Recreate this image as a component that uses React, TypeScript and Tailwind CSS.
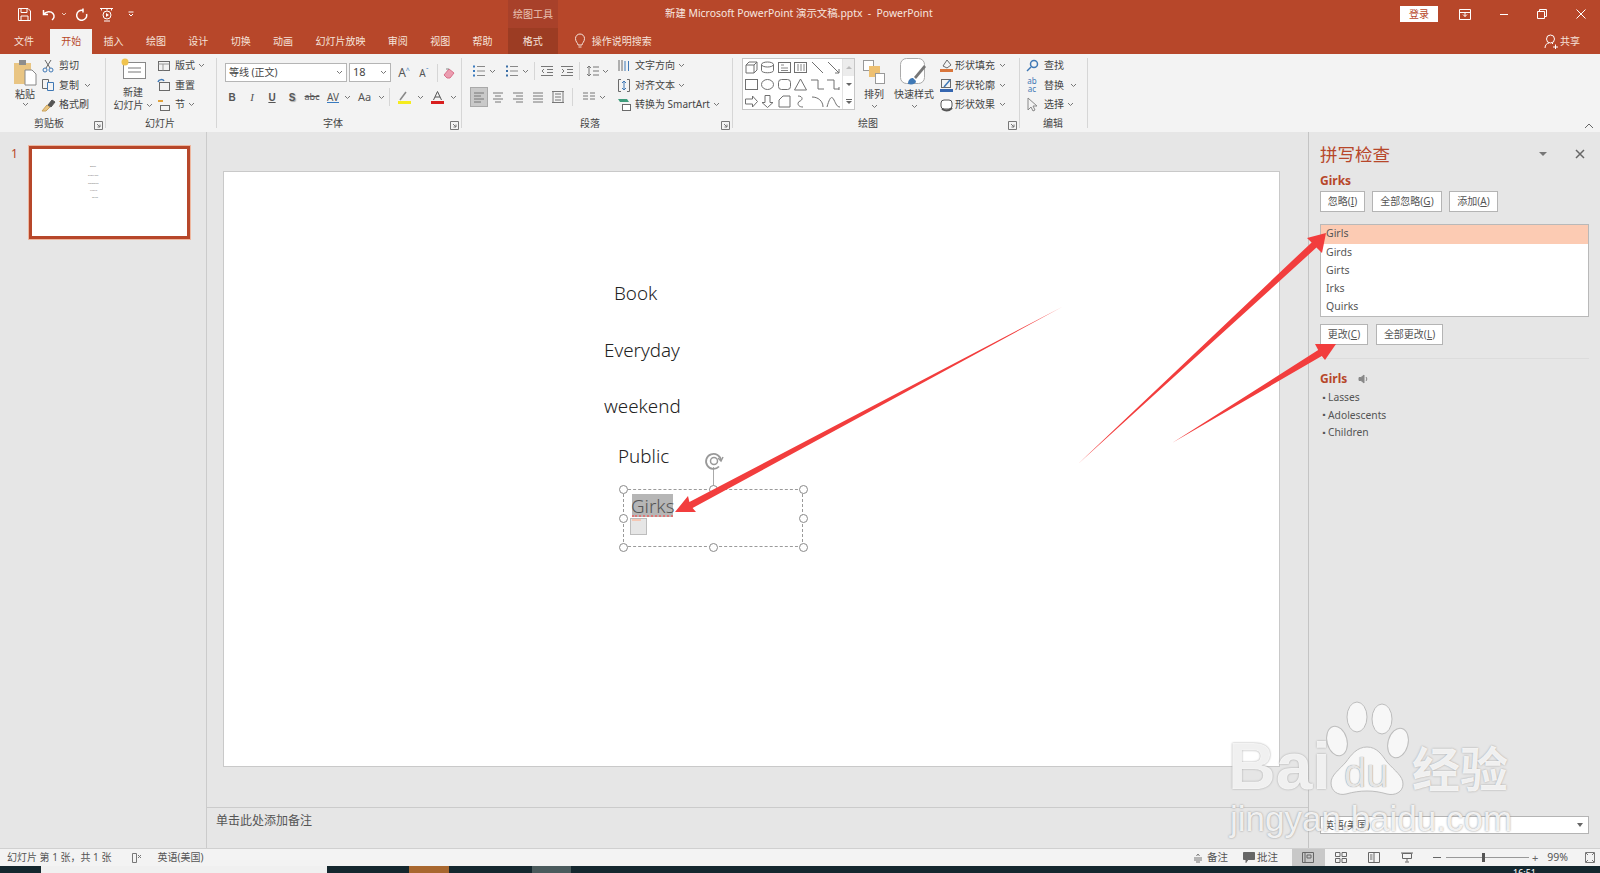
import type { ReactNode } from "react";

const TABS = ["开始", "插入", "绘图", "设计", "切换", "动画", "幻灯片放映", "审阅", "视图", "帮助"];
const SUGGESTIONS = ["Girls", "Girds", "Girts", "Irks", "Quirks"];
const SYNONYMS = ["Lasses", "Adolescents", "Children"];

function Ico({ w = 16, h = 16, stroke = "#6a6a6a", children }: { w?: number; h?: number; stroke?: string; children: ReactNode }) {
  return (
    <svg width={w} height={h} viewBox={`0 0 ${w} ${h}`} fill="none" stroke={stroke} strokeWidth="1" className="shrink-0">
      {children}
    </svg>
  );
}

function Caret() {
  return (
    <svg width="7" height="5" viewBox="0 0 7 5" fill="none" stroke="#777" strokeWidth="1" className="shrink-0">
      <path d="M1 1l2.5 2.5L6 1" />
    </svg>
  );
}

function Launcher() {
  return (
    <svg width="9" height="9" viewBox="0 0 9 9" fill="none" stroke="#777" strokeWidth="1" className="shrink-0">
      <path d="M.5 8.5v-8h8v8h-8zM3 3l3 3M6 3.5V6H3.5" />
    </svg>
  );
}

function SmallItem({ icon, label, caret, gap = "ml-[3px]" }: { icon: ReactNode; label: string; caret?: string; gap?: string }) {
  return (
    <div className="flex items-center h-[19.5px] whitespace-nowrap">
      <div className="w-[16px] flex justify-center shrink-0">{icon}</div>
      <span className={gap}>{label}</span>
      {caret && (
        <span className={caret}>
          <Caret />
        </span>
      )}
    </div>
  );
}

function Group({ width, label, labelClass, launcher, children }: { width: string; label: string; labelClass: string; launcher?: boolean; children: ReactNode }) {
  return (
    <>
      <div className={`${width} flex flex-col shrink-0`}>
        <div className="h-[61px] flex">{children}</div>
        <div className="h-[17px] flex items-center relative">
          <span className={labelClass}>{label}</span>
          {launcher && (
            <span className="ml-auto mr-[2px] mt-[3px]">
              <Launcher />
            </span>
          )}
        </div>
      </div>
      <div className="w-px h-[70px] mt-[4px] bg-[#d6d6d6] shrink-0" />
    </>
  );
}

function Cell({ className = "w-[20px]", children }: { className?: string; children: ReactNode }) {
  return <div className={`${className} h-[20px] flex items-center justify-center shrink-0`}>{children}</div>;
}

function ListIcon({ numbered }: { numbered?: boolean }) {
  return (
    <Ico w={14} h={14}>
      <path d="M5 2.5h8M5 7h8M5 11.5h8" stroke="#888" />
      <path d="M1 2.5h2M1 7h2M1 11.5h2" stroke={numbered ? "#3a6ea5" : "#3a7bbf"} strokeWidth="2" />
    </Ico>
  );
}

function AlignIcon({ lines }: { lines: string }) {
  return (
    <Ico w={14} h={14}>
      <path d={lines} stroke="#777" />
    </Ico>
  );
}

function Shape({ children }: { children: ReactNode }) {
  return (
    <div className="w-[16.500px] h-[17px] flex items-center justify-center">
      <Ico w={15} h={15} stroke="#707070">
        {children}
      </Ico>
    </div>
  );
}

function PaneButton({ children, width }: { children: ReactNode; width: string }) {
  return (
    <div className={`${width} h-[21px] bg-white border border-[#b4b4b4] flex items-center justify-center text-[10px] text-[#555] whitespace-nowrap`}>
      {children}
    </div>
  );
}

function Handle({ className }: { className: string }) {
  return <div className={`absolute w-[9px] h-[9px] rounded-full bg-white border-[1.5px] border-[#8a8a8a] ${className}`} />;
}

function Ribbon() {
  return (
    <div className="h-[78px] bg-[#f3f3f3] flex text-[10px] text-[#444] shrink-0">
      <Group width="w-[105px]" label="剪贴板" labelClass="ml-[34px]" launcher>
        <div className="ml-[12px] w-[26px] flex flex-col items-center pt-[5px]">
          <svg width="24" height="27" viewBox="0 0 24 27" className="shrink-0">
            <rect x="1" y="4" width="17" height="21" fill="#e9c583" />
            <rect x="6" y="1" width="7" height="5" fill="#8d8d8d" />
            <path d="M12 11h7l4 4v11H12z" fill="#fff" stroke="#888" />
          </svg>
          <span className="mt-[2px] leading-[12px]">粘贴</span>
          <span className="mt-[2px]">
            <Caret />
          </span>
        </div>
        <div className="ml-[2px] pt-[2px]">
          <SmallItem
            label="剪切"
            icon={
              <Ico w={14} h={14} stroke="#3f78b5">
                <circle cx="4" cy="11" r="2" />
                <circle cx="10" cy="11" r="2" />
                <path d="M5 9l5-8M9 9L4 1" stroke="#666" />
              </Ico>
            }
          />
          <SmallItem
            label="复制"
            caret="ml-[5px]"
            icon={
              <Ico w={14} h={14}>
                <path d="M1.500 1.500h6v9h-6z" />
                <path d="M6.500 4.500h6v8h-6z" fill="#f3f3f3" stroke="#3f78b5" />
              </Ico>
            }
          />
          <SmallItem
            label="格式刷"
            icon={
              <Ico w={15} h={14}>
                <path d="M1 13l5-6 3 2-4 4z" fill="#e9c583" stroke="#c9a25c" />
                <path d="M7 7l4-5 3 2-4 5z" fill="#555" stroke="#555" />
              </Ico>
            }
          />
        </div>
      </Group>
      <Group width="w-[110px]" label="幻灯片" labelClass="ml-[39px]">
        <div className="ml-[9px] w-[36px] flex flex-col items-center pt-[3px]">
          <svg width="26" height="24" viewBox="0 0 26 24" className="shrink-0">
            <rect x="3.500" y="5.500" width="22" height="16" fill="#fff" stroke="#888" />
            <path d="M8 11h13M8 15h13" stroke="#bbb" strokeWidth="2" />
            <circle cx="5" cy="5" r="3.500" fill="#f0c34e" />
          </svg>
          <span className="mt-[5px] leading-[13px]">新建</span>
          <div className="flex items-center leading-[13px] whitespace-nowrap">
            幻灯片
            <span className="ml-[2px]">
              <Caret />
            </span>
          </div>
        </div>
        <div className="ml-[5px] pt-[2px]">
          <SmallItem
            label="版式"
            caret="ml-[3px]"
            icon={
              <Ico w={14} h={14}>
                <rect x="1.500" y="2.500" width="11" height="9" />
                <path d="M1.500 5h11M6 5v6.500" stroke="#999" />
              </Ico>
            }
          />
          <SmallItem
            label="重置"
            icon={
              <Ico w={14} h={14}>
                <rect x="2.500" y="4.500" width="10" height="8" />
                <path d="M1 4c1-3 5-3 6-1" stroke="#3f78b5" strokeWidth="1.500" />
              </Ico>
            }
          />
          <SmallItem
            label="节"
            caret="ml-[3px]"
            icon={
              <Ico w={14} h={14}>
                <path d="M1 3h5" stroke="#e2a23a" strokeWidth="2" />
                <rect x="3.500" y="7.500" width="9" height="5" />
              </Ico>
            }
          />
        </div>
      </Group>
      <Group width="w-[244px]" label="字体" labelClass="ml-[106px]" launcher>
        <div className="flex flex-col">
          <div className="flex items-center mt-[9px]">
            <div className="ml-[8px] w-[122px] h-[19px] bg-white border border-[#b5b5b5] flex items-center pl-[3px] pr-[3px]">
              等线 (正文)
              <span className="ml-auto">
                <Caret />
              </span>
            </div>
            <div className="ml-[2px] w-[42px] h-[19px] bg-white border border-[#b5b5b5] flex items-center pl-[3px] pr-[3px] text-[11px]">
              18
              <span className="ml-auto">
                <Caret />
              </span>
            </div>
            <span className="ml-[3px] w-[20px] text-[12px] leading-[16px] text-center text-[#555]">A<sup className="text-[7px] text-[#3a7bbf]">^</sup></span>
            <span className="w-[20px] text-[10px] leading-[16px] text-center text-[#555]">A<sup className="text-[7px] text-[#3a7bbf]">ˇ</sup></span>
            <div className="w-px h-[18px] bg-[#d6d6d6] ml-[3px]" />
            <span className="ml-[4px]">
              <Ico w={14} h={14} stroke="#d9708a">
                <path d="M2 9l5-6 5 4-4 5H5z" fill="#eb9db0" />
                <path d="M4 3h3" stroke="#888" />
              </Ico>
            </span>
          </div>
          <div className="flex items-center mt-[5px] ml-[5px] text-[#555]">
            <Cell><b className="font-['Liberation_Sans'] text-[10px]">B</b></Cell>
            <Cell><i className="font-['Liberation_Serif'] text-[11px]">I</i></Cell>
            <Cell><u className="font-['Liberation_Sans'] font-bold text-[10px]">U</u></Cell>
            <Cell><b className="font-['Liberation_Sans'] text-[10px] [text-shadow:1px_1px_1px_#aaa]">S</b></Cell>
            <Cell><span className="line-through text-[9px]">abc</span></Cell>
            <Cell className="w-[22px]"><span className="text-[10px] leading-[9px] underline decoration-[#3a7bbf]">AV</span></Cell>
            <Caret />
            <Cell className="w-[27px]"><span className="text-[11px]">Aa</span></Cell>
            <Caret />
            <div className="w-px h-[18px] bg-[#d6d6d6] ml-[4px]" />
            <Cell className="w-[20px] ml-[4px]">
              <Ico w={15} h={15}>
                <path d="M3 10l6-8" stroke="#888" strokeWidth="1.500" />
                <rect x="1" y="11" width="13" height="3" fill="#f5ec1e" stroke="none" />
              </Ico>
            </Cell>
            <span className="ml-[3px]"><Caret /></span>
            <Cell className="w-[20px] ml-[3px]">
              <Ico w={15} h={15}>
                <path d="M3.500 10L7.500 1.500 11.500 10M5 7h5" stroke="#555" />
                <rect x="1" y="11" width="13" height="3" fill="#d81e1e" stroke="none" />
              </Ico>
            </Cell>
            <span className="ml-[3px]"><Caret /></span>
          </div>
        </div>
      </Group>
      <Group width="w-[270px]" label="段落" labelClass="ml-[118px]" launcher>
        <div className="w-[154px] flex flex-col">
          <div className="flex items-center mt-[8px] ml-[10px]">
            <ListIcon />
            <span className="ml-[3px]"><Caret /></span>
            <span className="ml-[9px]"><ListIcon numbered /></span>
            <span className="ml-[3px]"><Caret /></span>
            <div className="w-px h-[18px] bg-[#d6d6d6] ml-[5px]" />
            <span className="ml-[5px]"><AlignIcon lines="M1 2.500h12M7 5.500h6M7 8.500h6M1 11.500h12M4 5L2 7l2 2" /></span>
            <span className="ml-[6px]"><AlignIcon lines="M1 2.500h12M7 5.500h6M7 8.500h6M1 11.500h12M2 5l2 2-2 2" /></span>
            <div className="w-px h-[18px] bg-[#d6d6d6] ml-[5px]" />
            <span className="ml-[6px]"><AlignIcon lines="M3 2v10M1 4l2-2 2 2M1 10l2 2 2-2M7 3h6M7 7h6M7 11h6" /></span>
            <span className="ml-[2px]"><Caret /></span>
          </div>
          <div className="flex items-center mt-[7px] ml-[8px]">
            <div className="w-[18px] h-[20px] bg-[#c9c9c9] border border-[#a9a9a9] flex items-center justify-center">
              <AlignIcon lines="M2 3h10M2 6h7M2 9h10M2 12h7" />
            </div>
            <Cell><AlignIcon lines="M2 3h10M4 6h6M2 9h10M4 12h6" /></Cell>
            <Cell><AlignIcon lines="M2 3h10M5 6h7M2 9h10M5 12h7" /></Cell>
            <Cell><AlignIcon lines="M2 3h10M2 6h10M2 9h10M2 12h10" /></Cell>
            <Cell><AlignIcon lines="M1 1.500h12M1 12.500h12M4 4h6M4 7h6M4 10h6M2 1v12M12 1v12" /></Cell>
            <div className="w-px h-[18px] bg-[#d6d6d6] ml-[4px]" />
            <span className="ml-[9px]"><AlignIcon lines="M1 3h5M8 3h5M1 6h5M8 6h5M1 9h5M8 9h5" /></span>
            <span className="ml-[3px]"><Caret /></span>
          </div>
        </div>
        <div className="pt-[2px]">
          <SmallItem
            label="文字方向"
            caret="ml-[3px]"
            icon={
              <Ico w={14} h={15}>
                <path d="M2 2v11M5 2v11" />
                <path d="M8 13V3M11.500 13V3" stroke="#3f78b5" />
              </Ico>
            }
          />
          <SmallItem
            label="对齐文本"
            caret="ml-[3px]"
            icon={
              <Ico w={14} h={15}>
                <path d="M4 1.500H1.500v12H4M10 1.500h2.500v12H10" />
                <path d="M7 3v9M5 5l2-2 2 2M5 10l2 2 2-2" stroke="#3f78b5" />
              </Ico>
            }
          />
          <SmallItem
            label="转换为 SmartArt"
            caret="ml-[3px]"
            icon={
              <Ico w={15} h={15}>
                <path d="M1 2h9l2 3H3z" fill="#3f9c7c" stroke="none" />
                <rect x="5.500" y="7.500" width="8" height="6" fill="#fff" />
              </Ico>
            }
          />
        </div>
      </Group>
      <Group width="w-[286px]" label="绘图" labelClass="ml-[125px]" launcher>
        <div className="ml-[9px] mt-[4px] h-[52px] w-[113px] bg-white border border-[#c6c6c6] flex shrink-0">
          <div className="w-[99px] flex flex-wrap content-start">
            <Shape><path d="M2 5h8v8H2zM2 5l3-3h8v8l-3 3M10 5l3-3" /></Shape>
            <Shape><ellipse cx="7.500" cy="4.500" rx="6" ry="2.500" /><path d="M1.500 4.500v6c0 3 12 3 12 0v-6" /></Shape>
            <Shape><rect x="1.500" y="2.500" width="12" height="10" /><path d="M4 5h3M4 8h7M4 10.500h7" stroke="#888" /></Shape>
            <Shape><rect x="1.500" y="2.500" width="12" height="10" /><path d="M5 4v7M8 4v7M11 4v7" stroke="#888" /></Shape>
            <Shape><path d="M2 2l11 11" /></Shape>
            <Shape><path d="M2 2l11 11M13 9v4H9" /></Shape>
            <Shape><rect x="1.500" y="2.500" width="12" height="10" /></Shape>
            <Shape><ellipse cx="7.500" cy="7.500" rx="6" ry="5" /></Shape>
            <Shape><rect x="1.500" y="2.500" width="12" height="10" rx="3" /></Shape>
            <Shape><path d="M7.500 2l6 11h-12z" /></Shape>
            <Shape><path d="M1 3h7v9h6" /></Shape>
            <Shape><path d="M1 3h7v9h5M13 10v3" /></Shape>
            <Shape><path d="M1.500 5h7V2l5 5.500-5 5.500v-3h-7z" /></Shape>
            <Shape><path d="M5 1.500h5v7h3l-5.500 5-5.500-5h3z" /></Shape>
            <Shape><path d="M2 13V6l4-4h7v11z" /></Shape>
            <Shape><path d="M5 2c5 0 5 4 2 5s-3 6 3 6" /></Shape>
            <Shape><path d="M2 3c6 0 11 4 11 10" /></Shape>
            <Shape><path d="M1 13C4 2 6 2 8 6s3 7 6 7" /></Shape>
          </div>
          <div className="flex-1 border-l border-[#e2e2e2] flex flex-col items-center text-[#777]">
            <div className="h-[17px] w-full bg-[#ececec] flex items-center justify-center"><div className="w-0 h-0 border-x-[3px] border-x-transparent border-b-[3px] border-b-[#bbb]" /></div>
            <div className="h-[17px] flex items-center"><div className="w-0 h-0 border-x-[3px] border-x-transparent border-t-[3px] border-t-[#666]" /></div>
            <div className="h-[16px] flex flex-col items-center justify-center"><div className="w-[6px] h-px bg-[#666] mb-[1px]" /><div className="w-0 h-0 border-x-[3px] border-x-transparent border-t-[3px] border-t-[#666]" /></div>
          </div>
        </div>
        <div className="ml-[7px] w-[24px] flex flex-col items-center pt-[5px] shrink-0">
          <svg width="24" height="26" viewBox="0 0 24 26" className="shrink-0">
            <rect x="1.500" y="1.500" width="10" height="10" fill="#fff" stroke="#999" />
            <rect x="7" y="7" width="11" height="11" fill="#eec071" />
            <rect x="13.500" y="14.500" width="9" height="10" fill="#fff" stroke="#999" />
          </svg>
          <span className="mt-[3px] leading-[13px] whitespace-nowrap">排列</span>
          <span className="mt-[3px]"><Caret /></span>
        </div>
        <div className="ml-[7px] w-[42px] flex flex-col items-center pt-[3px] shrink-0">
          <svg width="30" height="30" viewBox="0 0 30 30" className="shrink-0">
            <rect x="1.500" y="1.500" width="24" height="25" rx="6" fill="#fff" stroke="#aaa" />
            <path d="M9 27c0-5 3-6 5-6l3 3c0 3-4 4-8 3z" fill="#3f78b5" />
            <path d="M15 20l10-12 2 2-10 12z" fill="#777" />
          </svg>
          <span className="leading-[13px] mt-[1px] whitespace-nowrap">快速样式</span>
          <span className="mt-[3px]"><Caret /></span>
        </div>
        <div className="ml-[3px] pt-[2px] shrink-0">
          <SmallItem
            label="形状填充"
            gap="ml-[1px]"
            caret="ml-[4px]"
            icon={
              <Ico w={15} h={15}>
                <path d="M4 8l4-6 4 5-4 3z" />
                <rect x="1" y="11" width="13" height="3" fill="#d9763c" stroke="none" />
              </Ico>
            }
          />
          <SmallItem
            label="形状轮廓"
            gap="ml-[1px]"
            caret="ml-[4px]"
            icon={
              <Ico w={15} h={15}>
                <rect x="2.500" y="1.500" width="9" height="8" />
                <path d="M5 9l6-7" stroke="#3f78b5" strokeWidth="1.500" />
                <rect x="1" y="11" width="13" height="3" fill="#3566b0" stroke="none" />
              </Ico>
            }
          />
          <SmallItem
            label="形状效果"
            gap="ml-[1px]"
            caret="ml-[4px]"
            icon={
              <Ico w={15} h={15}>
                <rect x="2" y="3" width="11" height="9" rx="3" fill="#fff" stroke="#555" />
                <path d="M3 12c3 2 7 2 10-1" stroke="#555" strokeWidth="2" />
              </Ico>
            }
          />
        </div>
      </Group>
      <Group width="w-[67px]" label="编辑" labelClass="ml-[23px]">
        <div className="ml-[4px] pt-[2px] shrink-0">
          <SmallItem
            label="查找"
            gap="ml-[4px]"
            icon={
              <Ico w={14} h={14} stroke="#3f78b5">
                <circle cx="9" cy="5" r="3.500" strokeWidth="1.500" />
                <path d="M6 8l-4 4" strokeWidth="1.500" />
              </Ico>
            }
          />
          <SmallItem
            label="替换"
            gap="ml-[4px]"
            caret="ml-[6px]"
            icon={<span className="text-[8px] leading-[8px] text-[#3f78b5] text-center">ab<br />ac</span>}
          />
          <SmallItem
            label="选择"
            gap="ml-[4px]"
            caret="ml-[3px]"
            icon={
              <Ico w={14} h={16} stroke="#888">
                <path d="M3 1v12l3-3 2 4 2-1-2-4h4z" />
              </Ico>
            }
          />
        </div>
      </Group>
      <div className="flex-1 flex items-end justify-end pb-[3px] pr-[6px]">
        <Ico w={10} h={6} stroke="#666">
          <path d="M1 5l4-4 4 4" />
        </Ico>
      </div>
    </div>
  );
}

function Watermark() {
  return (
    <div className="absolute inset-0 pointer-events-none overflow-hidden">
      <svg width="1600" height="873" viewBox="0 0 1600 873" className="absolute left-0 top-0">
        <g fill="#f7f7f7" stroke="#bdbdbd" strokeWidth="1">
          <ellipse cx="1357" cy="717" rx="10" ry="15" />
          <ellipse cx="1382" cy="719" rx="10" ry="15" />
          <ellipse cx="1337" cy="741" rx="10" ry="15" transform="rotate(-15 1337 741)" />
          <ellipse cx="1398" cy="743" rx="10" ry="15" transform="rotate(15 1398 743)" />
          <path d="M1367 747c10 0 15 8 20 15 8 9 16 14 16 22 0 8-8 12-16 10-7-2-13-3-20-3s-14 1-21 3c-8 2-15-3-15-11 0-8 8-13 15-21 5-7 11-15 21-15z" />
        </g>
      </svg>
      <span className="absolute left-[1228px] top-[728px] text-[66px] leading-[76px] font-bold font-['Liberation_Sans'] text-white/85 [text-shadow:0_0_2px_#999]">Bai</span>
      <span className="absolute left-[1344px] top-[751px] text-[40px] leading-[44px] font-['Liberation_Sans'] text-[#e6e6e6] [text-shadow:0_0_1px_#777]">du</span>
      <span className="absolute left-[1412px] top-[738px] text-[48px] leading-[56px] font-bold font-['Noto_Sans_CJK_SC'] text-white/85 [text-shadow:0_0_2px_#999]">经验</span>
      <span className="absolute left-[1230px] top-[795px] text-[35px] leading-[48px] font-['Liberation_Sans'] text-white/85 [text-shadow:0_0_2px_#888]">jingyan.baidu.com</span>
      <svg width="1600" height="873" viewBox="0 0 1600 873" className="absolute left-0 top-0">
        <g fill="#f23d3d">
          <polygon points="1062,307 689.400,501.900 688,496 675,512 696,512 692.600,508.100" />
          <polygon points="1078,464 1311.600,242.400 1307,238 1326,233 1322,253 1316.400,247.600" />
          <polygon points="1172,443 1318.200,350 1315,344 1336,344 1325,360 1321.800,356" />
        </g>
      </svg>
    </div>
  );
}

export default function App() {
  return (
    <div className="relative w-[1600px] h-[873px] overflow-hidden bg-[#e6e6e6] flex flex-col font-['Noto_Sans','Noto_Sans_CJK_SC',sans-serif] text-[#444]">
      {/* title bar */}
      <div className="h-[28px] bg-[#b7472a] flex items-center text-white shrink-0">
        <div className="w-[508px] flex items-center shrink-0">
          <span className="ml-[18px]">
            <Ico w={13} h={13} stroke="#fff">
              <path d="M.5.500h9.500l2.500 2.500v9.500H.5zM3 1v3.500h6V1M3 12.500V8h7v4.500" />
            </Ico>
          </span>
          <span className="ml-[11px]">
            <Ico w={14} h={13} stroke="#fff">
              <path d="M1.500 2v4.500H6M1.500 6.500C4 3 9 3 11 5.500s1 5-1 6.500" strokeWidth="1.500" />
            </Ico>
          </span>
          <span className="ml-[5px]"><Ico w={6} h={4} stroke="#eccabb"><path d="M1 1l2 2 2-2" /></Ico></span>
          <span className="ml-[9px]">
            <Ico w={12} h={13} stroke="#fff">
              <path d="M7 2.500A5 5 0 1 0 10.500 6M7 .5v4" strokeWidth="1.500" />
            </Ico>
          </span>
          <span className="ml-[11px]">
            <Ico w={15} h={15} stroke="#fff">
              <path d="M1 1.500h13M2.500 1.500v2M12.500 1.500v2M8 1.500v2M5 14h6" />
              <circle cx="8" cy="8" r="4" />
              <path d="M7 6v4l3-2z" fill="#fff" stroke="none" />
            </Ico>
          </span>
          <span className="ml-[14px]">
            <Ico w={6} h={6} stroke="#fff"><path d="M.5 1h5M1 3l2 2 2-2" /></Ico>
          </span>
        </div>
        <div className="w-[50px] h-full bg-[#a8412a] flex items-center justify-center text-[10px] text-[#eac4b4] shrink-0">绘图工具</div>
        <span className="ml-[107px] text-[10.400px] text-[#f8e7e0] whitespace-pre">新建 Microsoft PowerPoint 演示文稿.pptx  -  PowerPoint</span>
        <div className="ml-auto w-[38px] h-[16px] bg-white flex items-center justify-center text-[10px] text-[#b7472a] shrink-0">登录</div>
        <span className="ml-[21px]">
          <Ico w={12} h={11} stroke="#fff">
            <path d="M.5.500h11v10H.5zM.5 3.500h11M6 3.500v4M4 5.500l2 2 2-2" />
          </Ico>
        </span>
        <span className="ml-[28px]">
          <Ico w={10} h={3} stroke="#fff"><path d="M1 1.500h8" /></Ico>
        </span>
        <span className="ml-[28px]">
          <Ico w={10} h={10} stroke="#fff"><path d="M.5 2.500h7v7h-7zM2.500 2.500v-2h7v7h-2" /></Ico>
        </span>
        <span className="ml-[29px] mr-[14px]">
          <Ico w={10} h={10} stroke="#fff"><path d="M.5.500l9 9M9.500.5l-9 9" /></Ico>
        </span>
      </div>

      {/* tabs */}
      <div className="h-[26px] bg-[#b7472a] flex text-[10px] text-[#f6e3da] shrink-0">
        <div className="ml-[3px] w-[42px] flex items-center justify-center">文件</div>
        <div className="ml-[5px] flex">
          {TABS.map((t) => (
            <div
              key={t}
              className={t === "开始" ? "px-[11.200px] mt-[1px] bg-[#f3f3f3] text-[#b7472a] flex items-center" : "px-[11.200px] flex items-center"}
            >
              {t}
            </div>
          ))}
        </div>
        <div className="ml-[4px] w-[50px] bg-[#9c3c23] flex items-center justify-center">格式</div>
        <span className="ml-[16px] self-center">
          <Ico w={12} h={16} stroke="#f6e3da">
            <path d="M4 12c0-2-2.500-3-2.500-6.500a4.500 4.500 0 0 1 9 0C10.500 9 8 10 8 12zM4.500 14h3" />
          </Ico>
        </span>
        <span className="ml-[6px] self-center">操作说明搜索</span>
        <div className="ml-auto mr-[20px] flex items-center">
          <Ico w={14} h={15} stroke="#fff">
            <circle cx="6.500" cy="5" r="4" />
            <path d="M1 14c0-3 2-5 4-5M8 9l1 1M9 13h5M11.500 10.500v5" />
          </Ico>
          <span className="ml-[2px]">共享</span>
        </div>
      </div>

      <Ribbon />

      {/* main */}
      <div className="flex-1 flex min-h-0">
        <div className="w-[207px] shrink-0 border-r border-[#cbcbcb] pt-[14px] pl-[11px] flex items-start">
          <span className="text-[12px] leading-[16px] text-[#b7472a] w-[18px]">1</span>
          <div className="relative w-[161px] h-[93px] bg-white border-[3px] border-[#b7472a] outline outline-1 outline-[#eeb79f] text-[2.500px] leading-[3px] text-[#777]">
            <span className="absolute left-[58px] top-[16px]">Book</span>
            <span className="absolute left-[56px] top-[25px]">Everyday</span>
            <span className="absolute left-[56px] top-[33px]">weekend</span>
            <span className="absolute left-[58px] top-[40px]">Public</span>
            <span className="absolute left-[60px] top-[47px]">Girks</span>
          </div>
        </div>

        <div className="flex-1 flex flex-col min-w-0">
          <div className="flex-1 pl-[16px] pt-[39px]">
            <div className="relative w-[1057px] h-[596px] bg-white border border-[#c9c9c9] text-[18.800px] leading-[28px] font-light font-['Noto_Sans','Noto_Sans_CJK_SC',sans-serif] text-[#222]">
              <span className="absolute left-[390px] top-[107px]">Book</span>
              <span className="absolute left-[380px] top-[164px]">Everyday</span>
              <span className="absolute left-[380px] top-[220px]">weekend</span>
              <span className="absolute left-[394px] top-[270px]">Public</span>
              <div className="absolute left-[408px] top-[322px] w-[41px] h-[23px] bg-[#b6b6b6]" />
              <span className="absolute left-[407px] top-[320px] text-[#555]">Girks</span>
              <div className="absolute left-[408px] top-[343px] w-[41px] border-b-2 border-dotted border-[#d77]" />
              <div className="absolute left-[406px] top-[346px] w-[17px] h-[17px] bg-[#e6e6e6] border border-[#bdbdbd]">
                <div className="w-[9px] h-[2px] bg-[#f5c7b4] ml-[1px]" />
              </div>
              <div className="absolute left-[399px] top-[317px] w-[180px] h-[58px] border border-dashed border-[#9a9a9a]" />
              <div className="absolute left-[489px] top-[295px] w-px h-[22px] bg-[#aaa]" />
              <span className="absolute left-[480px] top-[279px]">
                <Ico w={20} h={20} stroke="#999">
                  <path d="M15 15.500a7.500 7.500 0 1 1 2-6" strokeWidth="1.800" />
                  <circle cx="10" cy="10" r="3.500" strokeWidth="1.500" />
                  <path d="M19 6l-2 4-3-3" strokeWidth="1.500" />
                </Ico>
              </span>
              <Handle className="left-[395px] top-[313px]" />
              <Handle className="left-[485px] top-[313px]" />
              <Handle className="left-[575px] top-[313px]" />
              <Handle className="left-[395px] top-[342px]" />
              <Handle className="left-[575px] top-[342px]" />
              <Handle className="left-[395px] top-[371px]" />
              <Handle className="left-[485px] top-[371px]" />
              <Handle className="left-[575px] top-[371px]" />
            </div>
          </div>
          <div className="h-[41px] border-t border-[#cbcbcb] pl-[9px] pt-[4px] text-[12px] leading-[18px] text-[#555] shrink-0">单击此处添加备注</div>
        </div>

        <div className="w-[292px] shrink-0 border-l border-[#c4c4c4] pl-[11px] pr-[11px] flex flex-col">
          <div className="h-[44px] flex items-center shrink-0">
            <span className="text-[17.500px] text-[#b7472a]">拼写检查</span>
            <div className="ml-auto mr-[28px] w-0 h-0 border-x-[4px] border-x-transparent border-t-[4px] border-t-[#777]" />
            <span className="mr-[4px]">
              <Ico w={10} h={10} stroke="#666"><path d="M1 1l8 8M9 1l-8 8" strokeWidth="1.500" /></Ico>
            </span>
          </div>
          <div className="h-[10px] flex items-center text-[12px] font-bold text-[#b7472a]">Girks</div>
          <div className="flex mt-[5px] gap-[7px]">
            <PaneButton width="w-[45px]">忽略(<u>I</u>)</PaneButton>
            <PaneButton width="w-[70px]">全部忽略(<u>G</u>)</PaneButton>
            <PaneButton width="w-[49px]">添加(<u>A</u>)</PaneButton>
          </div>
          <div className="mt-[12px] h-[93px] bg-white border border-[#b9b9b9] text-[10.500px] text-[#555] shrink-0">
            {SUGGESTIONS.map((s, i) => (
              <div key={s} className={i === 0 ? "h-[18.500px] pl-[5px] flex items-center bg-[#fccbb3]" : "h-[18.200px] pl-[5px] flex items-center"}>
                {s}
              </div>
            ))}
          </div>
          <div className="flex mt-[7px] gap-[8px]">
            <PaneButton width="w-[48px]">更改(<u>C</u>)</PaneButton>
            <PaneButton width="w-[67px]">全部更改(<u>L</u>)</PaneButton>
          </div>
          <div className="mt-[13px] h-px bg-[#dcdcdc] shrink-0" />
          <div className="mt-[12px] h-[15px] flex items-center text-[12px] font-bold text-[#b7472a] shrink-0">
            Girls
            <span className="ml-[11px]">
              <Ico w={11} h={10} stroke="#888">
                <path d="M1 3.500h2L6 1v8L3 6.500H1z" fill="#888" />
                <path d="M8 3c1 1 1 3 0 4" />
              </Ico>
            </span>
          </div>
          <div className="mt-[3px] text-[10.300px] text-[#555]">
            {SYNONYMS.map((s) => (
              <div key={s} className="h-[17.500px] flex items-center">
                <span className="w-[8px] text-[8px]">▪</span>
                {s}
              </div>
            ))}
          </div>
          <div className="mt-auto mb-[14px] h-[18px] bg-white border border-[#b4b4b4] flex items-center pl-[3px] pr-[5px] text-[10px] text-[#555] shrink-0">
            英语(美国)
            <div className="ml-auto w-0 h-0 border-x-[3.500px] border-x-transparent border-t-[4px] border-t-[#666]" />
          </div>
        </div>
      </div>

      {/* status bar */}
      <div className="h-[18px] bg-[#f3f3f3] border-t border-[#d0d0d0] flex items-center text-[10px] text-[#555] shrink-0">
        <span className="ml-[7px]">幻灯片 第 1 张，共 1 张</span>
        <span className="ml-[20px]">
          <Ico w={11} h={12} stroke="#777"><path d="M1.500 1.500h4v9h-4zM7 3l3 3M10 3L7 6" /></Ico>
        </span>
        <span className="ml-[15px]">英语(美国)</span>
        <span className="ml-auto">
          <Ico w={10} h={10} stroke="#777"><path d="M1 5h8M1 7h8M3 9h4M3.500 3L5 1l1.500 2" /></Ico>
        </span>
        <span className="ml-[4px] text-[10.500px]">备注</span>
        <span className="ml-[15px]">
          <Ico w={12} h={11} stroke="#666"><path d="M.5.500h11v7H5l-2 3v-3H.5z" fill="#666" /></Ico>
        </span>
        <span className="ml-[2px] text-[10.500px]">批注</span>
        <div className="ml-[14px] w-[33px] h-full bg-[#c8c8c8] flex items-center justify-center">
          <Ico w={12} h={11} stroke="#666"><path d="M.5.500h11v10H.5zM3 .5v10M5 3h4v3H5z" /></Ico>
        </div>
        <div className="w-[33px] flex justify-center">
          <Ico w={12} h={11} stroke="#666"><path d="M.5.500h4.500v4H.5zM7 .5h4.500v4H7zM.5 6.500h4.500v4H.5zM7 6.500h4.500v4H7z" /></Ico>
        </div>
        <div className="w-[33px] flex justify-center">
          <Ico w={12} h={11} stroke="#666"><path d="M.5.500h11v10H.5zM6 .5v10M2 3h2.500M2 5h2.500M2 7h2.500" /></Ico>
        </div>
        <div className="w-[33px] flex justify-center">
          <Ico w={12} h={11} stroke="#666"><path d="M0 1h12M1.500 1.500h9v5h-9zM6 6.500v3M4 10h4" /></Ico>
        </div>
        <span className="ml-[9px] w-[8px] h-px bg-[#666]" />
        <div className="ml-[5px] relative w-[83px] h-px bg-[#999]">
          <div className="absolute left-[36px] top-[-4px] w-[3px] h-[9px] bg-[#555]" />
        </div>
        <span className="ml-[3px] text-[11px] leading-[11px] text-[#666]">+</span>
        <span className="ml-[9px] text-[10.500px]">99%</span>
        <span className="ml-[17px] mr-[5px]">
          <Ico w={10} h={11} stroke="#777"><path d="M.5.500h9v10h-9zM3 3L1 1M7 3l2-2M3 8l-2 2M7 8l2 2" /></Ico>
        </span>
      </div>

      {/* taskbar, cut off by the bottom of the capture */}
      <div className="h-[7px] bg-[#14272e] flex shrink-0 relative">
        <div className="ml-[41px] w-[286px] bg-[#f0f0f0]" />
        <div className="ml-[82px] w-[40px] bg-[#a8672f]" />
        <div className="ml-[83px] w-[39px] bg-[#4a5a5c]" />
        <span className="absolute left-[1513px] top-[2px] text-[9px] leading-[10px] text-white">16:51</span>
      </div>

      <Watermark />
    </div>
  );
}
